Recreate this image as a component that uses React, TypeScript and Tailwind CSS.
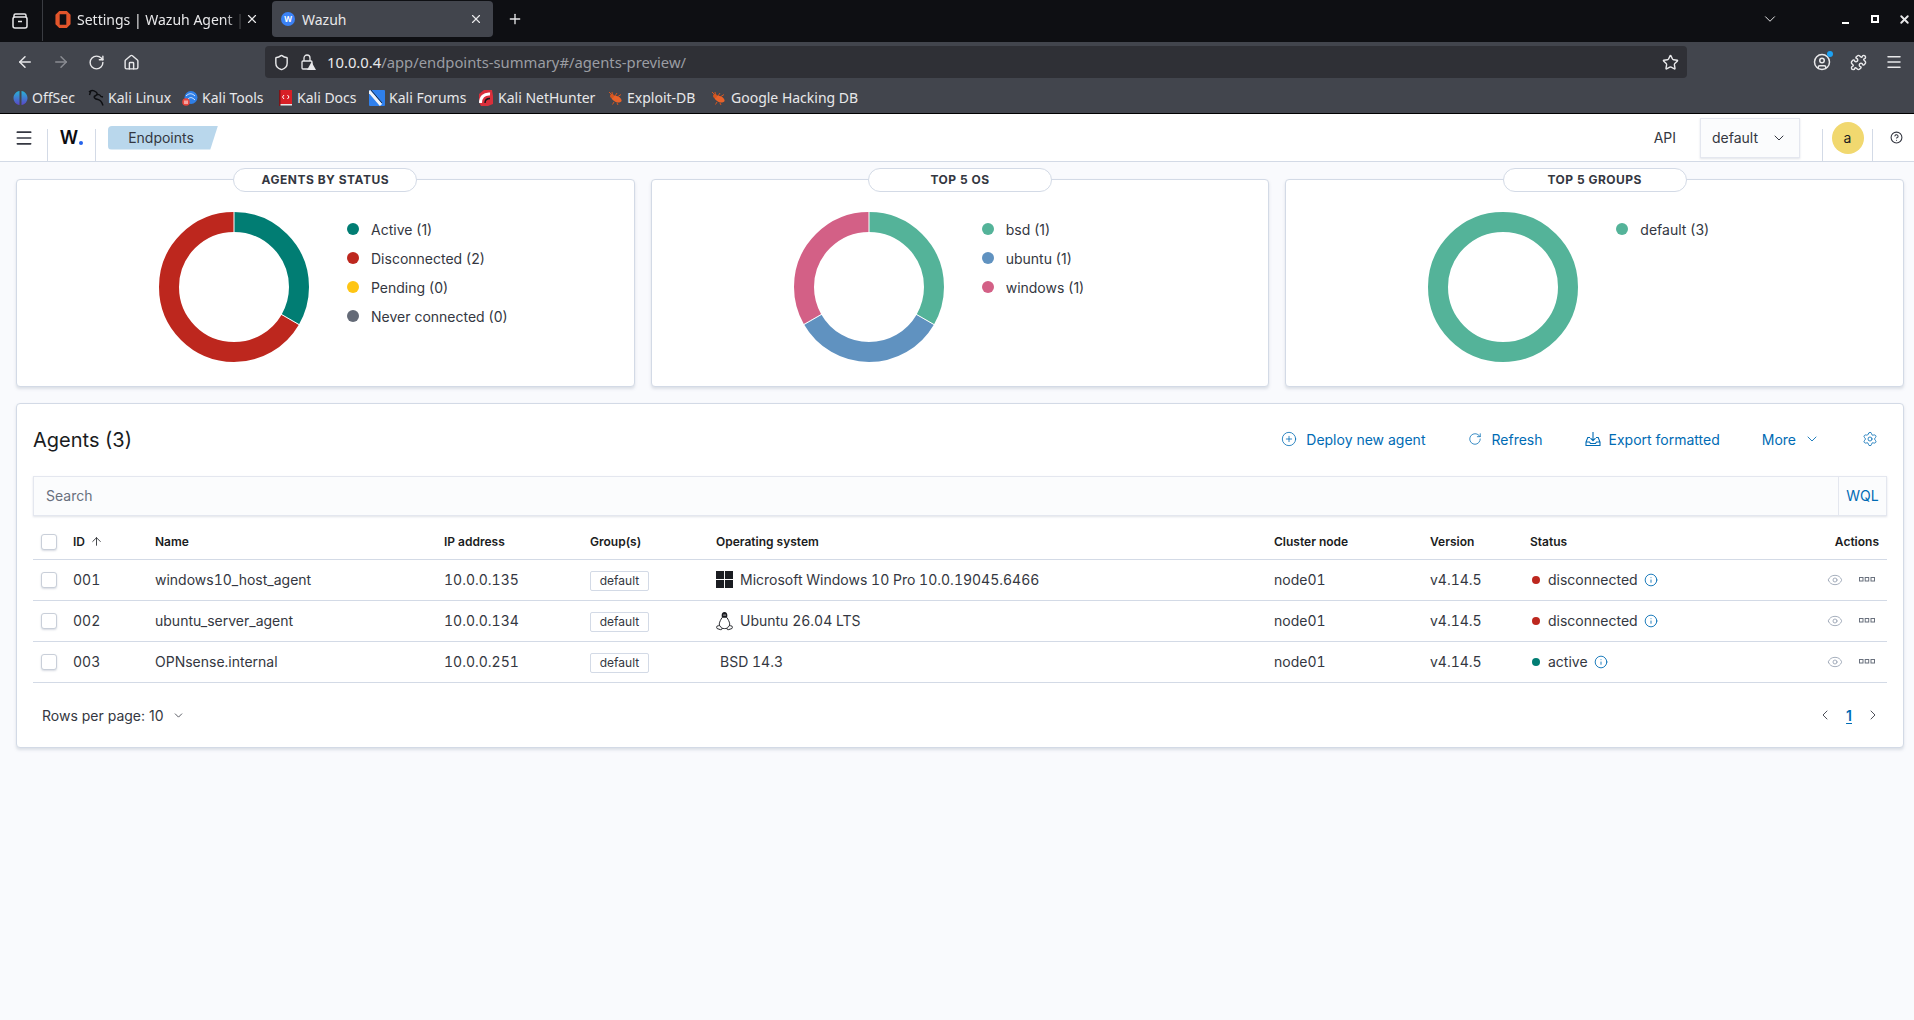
import { ArrowLeft, ArrowRight, RotateCw, Home, Shield, Star, Puzzle, Menu, ChevronDown, ChevronLeft, ChevronRight, X, Plus, CircleHelp, CirclePlus, Settings, Eye, ArrowUp, Info, CircleUser } from 'lucide-react';

const font = { fontFamily: 'Inter, "Noto Sans", sans-serif' };

// donut drawn as a stroked circle, one segment per value
function Donut({ segments }: { segments: { color: string; value: number }[] }) {
  const total = segments.reduce((s, x) => s + x.value, 0);
  const r = 65;
  const c = 2 * Math.PI * r;
  let acc = 0;
  return (
    <svg width="152" height="152" viewBox="0 0 152 152" className="shrink-0">
      <g transform="rotate(-90 76 76)">
        {segments.map((s, i) => {
          const len = (s.value / total) * c;
          const el = (
            <circle
              key={i}
              cx="76"
              cy="76"
              r={r}
              fill="none"
              stroke={s.color}
              strokeWidth="20"
              strokeDasharray={`${len} ${c - len}`}
              strokeDashoffset={-acc}
            />
          );
          acc += len;
          return el;
        })}
        {segments.length > 1 &&
          segments.map((s, i) => {
            const before = segments.slice(0, i).reduce((a, x) => a + x.value, 0);
            const a = (before / total) * 2 * Math.PI;
            return (
              <line
                key={i}
                x1={76 + 54 * Math.cos(a)}
                y1={76 + 54 * Math.sin(a)}
                x2={76 + 76 * Math.cos(a)}
                y2={76 + 76 * Math.sin(a)}
                stroke="#fff"
                strokeWidth="1"
              />
            );
          })}
      </g>
    </svg>
  );
}

function ChartCard({ title, items, segments }: { title: string; items: { color: string; label: string }[]; segments: { color: string; value: number }[] }) {
  return (
    <div className="relative h-[208px] flex-1 rounded-[4px] border border-[#d3dae6] bg-white shadow-[0_2px_3px_rgba(152,162,179,0.3)]">
      <div className="absolute left-1/2 top-[-12px] flex h-[24px] w-[184px] -translate-x-1/2 items-center justify-center rounded-full border border-[#d3dae6] bg-white text-[12px] font-bold tracking-[0.5px] text-[#343741]">
        {title}
      </div>
      <div className="flex pl-[141px] pt-[31px]">
        <Donut segments={segments} />
        <div className="ml-[37px] mt-[8px] flex flex-col gap-[9px]">
          {items.map((it) => (
            <div key={it.label} className="flex h-[20px] items-center gap-[12px] text-[14px] text-[#343741]">
              <span className="h-[12px] w-[12px] rounded-full" style={{ background: it.color }} />
              {it.label}
            </div>
          ))}
        </div>
      </div>
    </div>
  );
}

function WindowsIcon() {
  return (
    <svg width="17" height="17" viewBox="0 0 18 18" className="shrink-0">
      <path fill="#1a1c21" d="M0 0h8.500v8.500H0zM9.500 0H18v8.500H9.500zM0 9.500h8.500V18H0zM9.500 9.500H18V18H9.500z" />
    </svg>
  );
}

function LinuxIcon() {
  return (
    <svg width="17" height="20" viewBox="0 0 18 20" className="shrink-0" fill="none" stroke="#1a1c21" strokeWidth="1">
      <path fill="#1a1c21" stroke="none" d="M9 0.500c-2 0-3 1.600-3 3.600 0 1 .3 1.700.3 2.400h5.400c0-.7.3-1.400.3-2.400 0-2-1-3.600-3-3.600z" />
      <path d="M6.300 6.500C5.200 8.500 3.800 10.500 3.500 13c-.1 1 .2 2 .6 2.600M11.700 6.500c1.100 2 2.500 4 2.800 6.500.1 1-.2 2-.6 2.600M6 17.500c2 .7 4 .7 6 0" />
      <path fill="#fff" d="M1 15.500c1-.3 2-.8 3-.5.8.400 1.600 2 2.200 2.800.4.800-.2 1.500-1.200 1.400-1.300-.2-2.500-.9-3.800-1.200-.7-.5-.7-1.900-.2-2.500zM17 15.500c-1-.3-2-.8-3-.5-.8.400-1.600 2-2.200 2.800-.4.800.2 1.500 1.200 1.400 1.300-.2 2.500-.9 3.800-1.200.7-.5.7-1.900.2-2.500z" />
      <path fill="#fff" stroke="none" d="M8 3h.8v1.500H8zM9.300 3h.8v1.500h-.8z" />
    </svg>
  );
}

function ExportIcon() {
  return (
    <svg width="16" height="16" viewBox="0 0 16 16" fill="none" stroke="currentColor" strokeWidth="1.100" className="shrink-0">
      <path d="M5 6.500H2.800L1 11v3.500h14V11l-1.800-4.500H11M1 11h3.500l1 1.500h5l1-1.500H15" />
      <path d="M8 1v8.500M5.500 7.200 8 9.700l2.500-2.500" />
    </svg>
  );
}

function BoxesIcon() {
  return (
    <svg width="16" height="6" viewBox="0 0 16 6" fill="none" stroke="#69707d" strokeWidth="1">
      <rect x="0.500" y="0.500" width="3.500" height="3.500" />
      <rect x="6.200" y="0.500" width="3.500" height="3.500" />
      <rect x="12" y="0.500" width="3.500" height="3.500" />
    </svg>
  );
}

function Favicon({ kind }: { kind: string }) {
  if (kind === 'offsec')
    return (
      <svg width="15" height="16" viewBox="0 0 15 16">
        <defs>
          <linearGradient id="offsec-a" x1="0" y1="0" x2="0" y2="1">
            <stop offset="0" stopColor="#27b2d6" />
            <stop offset="1" stopColor="#5a46c8" />
          </linearGradient>
        </defs>
        <path fill="url(#offsec-a)" d="M6.500 1C3 1.500.5 4.500.5 8s2.500 6.500 6 7zM8.500 1c3.500.5 6 3.500 6 7s-2.500 6.500-6 7z" />
      </svg>
    );
  if (kind === 'linux')
    return (
      <svg width="17" height="18" viewBox="0 0 17 18" fill="none" stroke="#0d0e11" strokeWidth="1.400">
        <path d="M1 3c2-2 5-1.500 7 0s1 3-1 4 0 3 3 3.500 4 3 5 6M3 1.500 1.500 6M8 6c2-1 4-.5 5 1.500l2 .5" />
      </svg>
    );
  if (kind === 'tools')
    return (
      <svg width="16" height="16" viewBox="0 0 16 16">
        <circle cx="9" cy="7.500" r="6.500" fill="#2f7fe6" />
        <path d="M4 6c3-3 6-3 9 0M6 9c2-2 4-2 7 1" stroke="#d4e6ff" fill="none" />
        <circle cx="4" cy="12" r="3.800" fill="#e8453c" />
        <path d="M3 10.500V14M5 10.500V14" stroke="#fff" />
      </svg>
    );
  if (kind === 'docs')
    return (
      <svg width="13" height="18" viewBox="0 0 13 18">
        <path fill="#d81f26" d="M0 1h13v14H0z" />
        <path fill="#e8e8ea" d="M1 15h12v1.500H1z" />
        <path fill="#7f1418" d="M0 1h1.500v16H0z" />
        <path d="M5 6 3.500 8 5 10M8.500 6 10 8l-1.500 2" stroke="#fff" fill="none" />
      </svg>
    );
  if (kind === 'forums')
    return (
      <svg width="16" height="16" viewBox="0 0 16 16">
        <rect x="0" y="0" width="16" height="16" rx="1" fill="#2f80ed" />
        <path d="M0 1 12 15" stroke="#f2f4f7" strokeWidth="3" />
        <path d="M2 0 13 13" stroke="#15171c" strokeWidth="0.800" />
      </svg>
    );
  if (kind === 'nethunter')
    return (
      <svg width="16" height="16" viewBox="0 0 16 16">
        <path fill="#d92f3b" d="M1 4 6 0h8l1 6v8l-5 2H3L1 12z" />
        <path d="M2.500 13c0-6 3.500-9.500 9.500-9" stroke="#fff" strokeWidth="3" fill="none" />
        <path d="M7 13c0-3 1.500-4.500 5-4.500" stroke="#15171c" strokeWidth="1.500" fill="none" />
      </svg>
    );
  return (
    <svg width="15" height="14" viewBox="0 0 15 14">
      <ellipse cx="8.500" cy="8" rx="5.500" ry="3" transform="rotate(25 8.500 8)" fill="#e8622a" />
      <circle cx="4" cy="5" r="2" fill="#d6561f" />
      <path d="M1 1l3 3M4 1l.5 3M7 5 9 2M10 5.500 13 3.500M6 11l-1.500 2.500M9 12l1 2" stroke="#d6561f" strokeWidth="1" />
    </svg>
  );
}

const bookmarks = [
  { kind: 'offsec', label: 'OffSec', cls: 'w-[75px] gap-[4px]' },
  { kind: 'linux', label: 'Kali Linux', cls: 'w-[94px] gap-[3px]' },
  { kind: 'tools', label: 'Kali Tools', cls: 'w-[97px] gap-[4px]' },
  { kind: 'docs', label: 'Kali Docs', cls: 'w-[90px] gap-[5px]' },
  { kind: 'forums', label: 'Kali Forums', cls: 'w-[109px] gap-[4px]' },
  { kind: 'nethunter', label: 'Kali NetHunter', cls: 'w-[130px] gap-[4px]' },
  { kind: 'bug', label: 'Exploit-DB', cls: 'w-[103px] gap-[4px]' },
  { kind: 'bug', label: 'Google Hacking DB', cls: 'gap-[5px]' },
];

function BrowserChrome() {
  return (
    <div style={{ fontFamily: '"Noto Sans", Inter, sans-serif' }} className="text-[14px] text-[#e8e8ea]">
      <div className="flex h-[42px] items-start bg-[#0e0f13] pl-[11px] pt-[1px]">
        <div className="-mt-[1px] flex h-[41px] w-[32px] items-center border-r border-[#3a3c42]">
          <svg width="18" height="18" viewBox="0 0 18 18" fill="none" stroke="#e8e8ea" strokeWidth="1.500"><path d="M3 5V3.500A1.500 1.500 0 0 1 4.500 2h9A1.500 1.500 0 0 1 15 3.500V5" /><rect x="2" y="5" width="14" height="11" rx="2" /><path d="M7 9.500h4" /></svg>
        </div>
        <div className="flex h-[36px] w-[229px] items-center pl-[12px]">
          <svg width="16" height="17" viewBox="0 0 16 18" className="shrink-0"><path fill="#e2552b" d="M4 0h8l4 4v10l-4 4H4l-4-4V4zM4.500 3.500v11h7v-11z" /></svg>
          <span className="ml-[6px] w-[168px] shrink-0 overflow-hidden whitespace-nowrap [mask-image:linear-gradient(to_right,black_88%,transparent)]">Settings | Wazuh Agent | S</span>
          <X size={14} className="shrink-0" />
        </div>
        <div className="flex h-[36px] w-[221px] items-center rounded-[4px] bg-[#42454d] pl-[9px]">
          <span className="flex h-[14px] w-[14px] items-center justify-center rounded-full bg-[#3b82f6] text-[8px] font-bold text-white">W</span>
          <span className="ml-[7px] flex-1">Wazuh</span>
          <X size={14} className="mr-[10px]" />
        </div>
        <div className="ml-[14px] flex h-[36px] items-center">
          <Plus size={16} />
        </div>
        <div className="flex-1" />
        <div className="flex h-[36px] items-center">
          <ChevronDown size={18} strokeWidth={1.300} className="mr-[63px]" />
          <span className="mr-[22px] mt-[8px] block h-[2px] w-[7px] bg-white" />
          <span className="mr-[19px] block h-[8px] w-[8px] border-2 border-white" />
          <X size={13} strokeWidth={3.500} className="mr-[3px]" />
        </div>
      </div>
      <div className="flex h-[42px] items-center bg-[#42454d] pb-[2px] pl-[16px]">
        <ArrowLeft size={18} />
        <ArrowRight size={18} className="ml-[18px] text-[#8a8c92]" />
        <RotateCw size={17} className="ml-[18px]" />
        <Home size={17} className="ml-[18px]" />
        <div className="ml-[125px] flex h-[32px] w-[1422px] items-center rounded-[4px] bg-[#2f3036] pl-[8px] pr-[8px]">
          <Shield size={17} />
          <svg width="17" height="18" viewBox="0 0 17 18" fill="none" stroke="#e8e8ea" strokeWidth="1.300" className="ml-[10px]"><rect x="2" y="8" width="10" height="8" rx="1" /><path d="M4 8V5a3 3 0 0 1 6 0v3" /><path fill="#e8e8ea" stroke="none" d="M11.500 9l4.500 8H7z" /></svg>
          <span className="ml-[10px] whitespace-nowrap text-[14.800px]">
            10.0.0.4<span className="text-[#9b9da3]">/app/endpoints-summary#/agents-preview/</span>
          </span>
          <div className="flex-1" />
          <Star size={17} />
        </div>
        <div className="relative ml-[126px]">
          <CircleUser size={18} />
          <span className="absolute right-[-2px] top-[-2px] h-[6px] w-[6px] rounded-full bg-[#1da1f2]" />
        </div>
        <Puzzle size={17} className="ml-[19px]" />
        <Menu size={18} className="ml-[18px]" />
      </div>
      <div className="flex h-[29px] items-center bg-[#42454d] pb-[2px] pl-[13px] text-[14px]">
        {bookmarks.map((b) => (
          <div key={b.label} className={`flex items-center whitespace-nowrap ${b.cls}`}>
            <Favicon kind={b.kind} />
            {b.label}
          </div>
        ))}
      </div>
    </div>
  );
}

function AppHeader() {
  return (
    <div className="flex h-[49px] items-center border-b border-t border-b-[#d3dae6] border-t-black bg-white text-[14px] text-[#343741]">
      <div className="flex w-[47px] justify-center">
        <Menu size={20} strokeWidth={2} className="text-[#343741]" />
      </div>
      <div className="h-[32px] w-px self-end bg-[#d3dae6]" />
      <div className="flex h-full w-[47px] items-center justify-center pt-[1px]">
        <span className="text-[18px] font-semibold leading-none text-[#0b0c0f]">W</span>
        <span className="ml-[1px] mt-[10px] h-[4px] w-[4px] rounded-full bg-[#2563eb]" />
      </div>
      <div className="h-[32px] w-px self-end bg-[#d3dae6]" />
      <div className="ml-[12px] flex h-[24px] w-[110px] items-center justify-center rounded-l-[4px] bg-[#b9d7ec] pr-[4px] [clip-path:polygon(0_0,100%_0,93%_100%,0_100%)]">
        Endpoints
      </div>
      <div className="flex-1" />
      <span>API</span>
      <div className="ml-[24px] flex h-[40px] w-[100px] items-center justify-between border border-[#e4e7ef] bg-[#fbfcfd] pl-[11px] pr-[12px] shadow-[0_1px_2px_rgba(152,162,179,0.3)]">
        default
        <ChevronDown size={16} strokeWidth={1.500} />
      </div>
      <div className="ml-[22px] h-[32px] w-px self-end bg-[#d3dae6]" />
      <div className="flex w-[49px] items-center justify-center">
        <span className="flex h-[32px] w-[32px] items-center justify-center rounded-full bg-[#f1d86f] text-[#1a1c21]">a</span>
      </div>
      <div className="h-[32px] w-px self-end bg-[#d3dae6]" />
      <div className="flex w-[41px] justify-center pl-[6px]">
        <CircleHelp size={13} />
      </div>
    </div>
  );
}

const rows = [
  { id: '001', name: 'windows10_host_agent', ip: '10.0.0.135', os: 'Microsoft Windows 10 Pro 10.0.19045.6466', icon: 'win', status: 'disconnected', color: 'bg-[#bd271e]' },
  { id: '002', name: 'ubuntu_server_agent', ip: '10.0.0.134', os: 'Ubuntu 26.04 LTS', icon: 'linux', status: 'disconnected', color: 'bg-[#bd271e]' },
  { id: '003', name: 'OPNsense.internal', ip: '10.0.0.251', os: 'BSD 14.3', icon: '', status: 'active', color: 'bg-[#017d73]' },
];

function Checkbox() {
  return <span className="block h-[16px] w-[16px] rounded-[3px] border border-[#c9cfd9] bg-white shadow-[0_1px_2px_rgba(152,162,179,0.4)]" />;
}

function AgentsTable() {
  return (
    <table className="w-full table-fixed border-collapse text-[14px] text-[#343741]">
      <colgroup>
        <col className="w-[32px]" />
        <col className="w-[82px]" />
        <col className="w-[289px]" />
        <col className="w-[146px]" />
        <col className="w-[126px]" />
        <col className="w-[558px]" />
        <col className="w-[156px]" />
        <col className="w-[100px]" />
        <col className="w-[250px]" />
        <col />
      </colgroup>
      <thead>
        <tr className="h-[34px] border-b border-[#d3dae6] text-left text-[12px] font-semibold text-[#1a1c21]">
          <th className="pl-[8px] font-semibold"><Checkbox /></th>
          <th className="pl-[8px] font-semibold">
            <span className="flex items-center gap-[5px]">ID <ArrowUp size={13} strokeWidth={1.500} /></span>
          </th>
          <th className="pl-[8px] font-semibold">Name</th>
          <th className="pl-[8px] font-semibold">IP address</th>
          <th className="pl-[8px] font-semibold">Group(s)</th>
          <th className="pl-[8px] font-semibold">Operating system</th>
          <th className="pl-[8px] font-semibold">Cluster node</th>
          <th className="pl-[8px] font-semibold">Version</th>
          <th className="pl-[8px] font-semibold">Status</th>
          <th className="pr-[8px] text-right font-semibold">Actions</th>
        </tr>
      </thead>
      <tbody className="tabular-nums">
        {rows.map((r) => (
          <tr key={r.id} className="h-[41px] border-b border-[#d3dae6]">
            <td className="pl-[8px]"><Checkbox /></td>
            <td className="pl-[8px]">{r.id}</td>
            <td className="pl-[8px]">{r.name}</td>
            <td className="pl-[8px]">{r.ip}</td>
            <td className="pl-[8px]">
              <span className="inline-flex h-[20px] w-[59px] items-center justify-center rounded-[2px] border border-[#d3dae6] text-[12px]">default</span>
            </td>
            <td className="pl-[8px]">
              <span className="flex items-center whitespace-nowrap">
                {r.icon === 'win' && <WindowsIcon />}
                {r.icon === 'linux' && <LinuxIcon />}
                <span className={r.icon ? 'ml-[7px]' : 'ml-[4px]'}>{r.os}</span>
              </span>
            </td>
            <td className="pl-[8px]">node01</td>
            <td className="pl-[8px]">v4.14.5</td>
            <td className="pl-[8px]">
              <span className="flex items-center pl-[2px]">
                <span className={`h-[8px] w-[8px] rounded-full ${r.color}`} />
                <span className="ml-[8px]">{r.status}</span>
                <Info size={14} strokeWidth={1.500} className="ml-[6px] text-[#006bb4]" />
              </span>
            </td>
            <td className="pr-[12px]">
              <span className="flex items-center justify-end">
                <Eye size={16} strokeWidth={1.300} className="text-[#98a2b3]" />
                <span className="ml-[16px]"><BoxesIcon /></span>
              </span>
            </td>
          </tr>
        ))}
      </tbody>
    </table>
  );
}

export default function App() {
  return (
    <div style={font} className="flex h-[1020px] w-[1914px] flex-col overflow-hidden bg-[#f9fafd]">
      <BrowserChrome />
      <AppHeader />
      <div className="flex gap-[16px] pl-[16px] pr-[10px] pt-[17px]">
        <ChartCard
          title="AGENTS BY STATUS"
          items={[
            { color: '#017d73', label: 'Active (1)' },
            { color: '#bd271e', label: 'Disconnected (2)' },
            { color: '#fec514', label: 'Pending (0)' },
            { color: '#646a77', label: 'Never connected (0)' },
          ]}
          segments={[{ color: '#017d73', value: 1 }, { color: '#bd271e', value: 2 }]}
        />
        <ChartCard
          title="TOP 5 OS"
          items={[
            { color: '#54b399', label: 'bsd (1)' },
            { color: '#6092c0', label: 'ubuntu (1)' },
            { color: '#d36086', label: 'windows (1)' },
          ]}
          segments={[{ color: '#54b399', value: 1 }, { color: '#6092c0', value: 1 }, { color: '#d36086', value: 1 }]}
        />
        <ChartCard
          title="TOP 5 GROUPS"
          items={[{ color: '#54b399', label: 'default (3)' }]}
          segments={[{ color: '#54b399', value: 1 }]}
        />
      </div>
      <div className="ml-[16px] mr-[10px] mt-[16px] h-[345px] rounded-[4px] border border-[#d3dae6] bg-white px-[16px] shadow-[0_2px_3px_rgba(152,162,179,0.3)]">
        <div className="flex h-[72px] items-center text-[14px] text-[#006bb4]">
          <span className="text-[20px] font-normal text-[#1a1c21]">Agents (3)</span>
          <div className="flex-1" />
          <div className="flex items-center pb-[2px]">
            <CirclePlus size={16} strokeWidth={1.200} />
            <span className="ml-[9px]">Deploy new agent</span>
            <RotateCw size={14} strokeWidth={1.300} className="ml-[43px]" />
            <span className="ml-[9px]">Refresh</span>
            <span className="ml-[42px]"><ExportIcon /></span>
            <span className="ml-[8px]">Export formatted</span>
            <span className="ml-[42px]">More</span>
            <ChevronDown size={16} strokeWidth={1.300} className="ml-[8px]" />
            <Settings size={16} strokeWidth={1.200} className="ml-[42px] mr-[9px]" />
          </div>
        </div>
        <div className="flex h-[40px] items-center border border-[#e4e7ef] bg-[#fbfcfd] pl-[12px] text-[14px] text-[#69707d] shadow-[0_1px_2px_rgba(152,162,179,0.3)]">
          <span className="flex-1 pb-[1px]">Search</span>
          <span className="flex h-full w-[48px] items-center justify-center border-l border-[#e4e7ef] pb-[1px] text-[#006bb4]">WQL</span>
        </div>
        <div className="mt-[9px]">
          <AgentsTable />
        </div>
        <div className="flex h-[65px] items-center pl-[9px] pr-[6px] text-[14px] text-[#343741]">
          <span>Rows per page: 10</span>
          <ChevronDown size={13} strokeWidth={1.500} className="ml-[8px]" />
          <div className="flex-1" />
          <ChevronLeft size={16} strokeWidth={1.300} />
          <span className="mx-[13px] font-semibold text-[#006bb4] underline underline-offset-2">1</span>
          <ChevronRight size={16} strokeWidth={1.300} />
        </div>
      </div>
    </div>
  );
}
